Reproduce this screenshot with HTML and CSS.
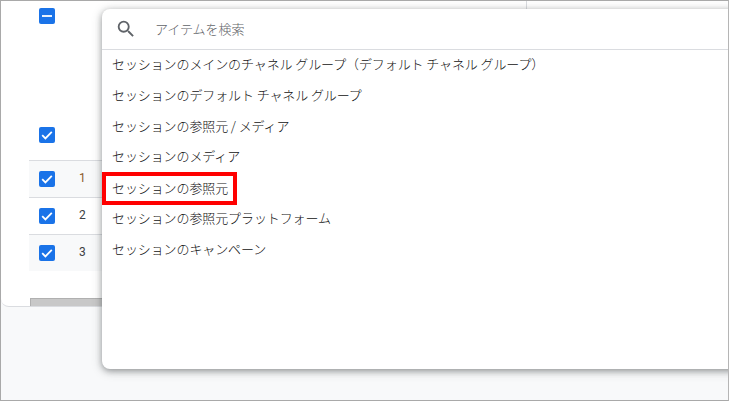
FILE: index.html
```html
<!DOCTYPE html>
<html lang="ja">
<head>
    <meta charset="utf-8">
    <link rel="stylesheet" href="styles.css">
</head>
<body>
    <div class="screen">
        <div class="card">
            <div class="col-line"></div>
            <div class="top-row">
                <span class="check"><svg viewBox="0 0 16 16"><path d="M3 8h10" /></svg></span>
            </div>
            <div class="head-row">
                <span class="check"><svg viewBox="0 0 16 16"><path d="M3.2 8.2l3.2 3.2 6.4-6.6" /></svg></span>
            </div>
            <div class="table-row shaded">
                <span class="check"><svg viewBox="0 0 16 16"><path d="M3.2 8.2l3.2 3.2 6.4-6.6" /></svg></span>
                <span class="num orange">1</span>
            </div>
            <div class="table-row">
                <span class="check"><svg viewBox="0 0 16 16"><path d="M3.2 8.2l3.2 3.2 6.4-6.6" /></svg></span>
                <span class="num">2</span>
            </div>
            <div class="table-row shaded">
                <span class="check"><svg viewBox="0 0 16 16"><path d="M3.2 8.2l3.2 3.2 6.4-6.6" /></svg></span>
                <span class="num">3</span>
            </div>
            <div class="scrollbar"></div>
        </div>

        <!-- dropdown over the table -->
        <div class="menu">
            <div class="search">
                <svg class="search-icon" viewBox="0 0 24 24"><path d="M15.5 14h-.79l-.28-.27A6.47 6.47 0 0 0 16 9.5 6.5 6.5 0 1 0 9.5 16c1.61 0 3.09-.59 4.23-1.57l.27.28v.79l5 4.99L20.49 19l-4.99-5zm-6 0C7.01 14 5 11.99 5 9.5S7.01 5 9.5 5 14 7.01 14 9.5 11.99 14 9.5 14z" /></svg>
                <span class="search-text">アイテムを検索</span>
            </div>
            <ul class="items">
                <li>セッションのメインのチャネル グループ（デフォルト チャネル グループ）</li>
                <li>セッションのデフォルト チャネル グループ</li>
                <li>セッションの参照元 / メディア</li>
                <li>セッションのメディア</li>
                <li class="picked"><span class="red-box">セッションの参照元</span></li>
                <li>セッションの参照元プラットフォーム</li>
                <li>セッションのキャンペーン</li>
            </ul>
        </div>
    </div>
</body>
</html>
```

FILE: styles.css
```css
* {
    box-sizing: border-box;
}

body {
    margin: 0;
    font-family: "Noto Sans CJK JP", "Noto Sans", sans-serif;
    color: #3c4043;
}

.screen {
    position: relative;
    width: 729px;
    height: 401px;
    overflow: hidden;
    background-color: #f8f9fa;
    border: 1px solid #a9a9a9;
    border-right-color: #b5b5b5;
}

.card {
    position: relative;
    height: 306px;
    padding-top: 7px;
    background-color: #fff;
    border-bottom: 1px solid #dadce0;
    border-radius: 0 0 8px 8px;
}

.col-line {
    position: absolute;
    top: 0;
    left: 525px;
    width: 1px;
    height: 8px;
    background-color: #dadce0;
}

.top-row {
    height: 112px;
    padding: 0 0 0 38px;
}

.head-row {
    height: 40px;
    padding: 7px 0 0 38px;
}

.table-row {
    display: flex;
    align-items: center;
    height: 37px;
    margin-left: 28px;
    padding-left: 10px;
    border-top: 1px solid #dadce0;
}

.shaded {
    background-color: #f8f9fa;
}

.check {
    display: block;
    width: 16px;
    height: 16px;
    background-color: #1a73e8;
    border-radius: 2px;
}

.check svg {
    display: block;
    width: 16px;
    height: 16px;
    fill: none;
    stroke: #fff;
    stroke-width: 1.8;
}

.num {
    margin-left: 24px;
    padding-bottom: 3px;
    font-family: Roboto, sans-serif;
    font-size: 12px;
    color: #3c4043;
}

.orange {
    color: #8a5a2b;
}

.scrollbar {
    position: absolute;
    left: 29px;
    bottom: 0;
    width: 200px;
    height: 8px;
    background-color: #c8c8c8;
    border: 1px solid #b0b0b0;
    border-bottom: none;
}

.menu {
    position: absolute;
    top: 8px;
    left: 101px;
    width: 640px;
    height: 360px;
    background-color: #fff;
    border-radius: 8px;
    box-shadow: 0 2px 6px rgba(60, 64, 67, 0.45), 0 2px 12px rgba(60, 64, 67, 0.2);
}

.search {
    display: flex;
    align-items: center;
    height: 41px;
    padding-left: 13px;
    border-bottom: 1px solid #dadce0;
}

.search-icon {
    width: 22px;
    height: 22px;
    fill: #5f6368;
}

.search-text {
    margin-left: 18px;
    padding-bottom: 2px;
    font-size: 13px;
    font-weight: 300;
    letter-spacing: -0.05px;
    color: #5f6368;
}

.items {
    margin: 0;
    padding: 0;
    list-style: none;
}

.items li {
    height: 30.8px;
    padding-left: 10px;
    font-size: 13px;
    font-weight: 300;
    letter-spacing: -0.1px;
    line-height: 28px;
    white-space: nowrap;
    color: #111;
}

.items .picked {
    padding-left: 0;
}

.red-box {
    display: inline-block;
    width: 135px;
    height: 33px;
    margin-top: -1px;
    padding-left: 6px;
    line-height: 23px;
    border: 4px solid #f00;
    vertical-align: top;
}
```
